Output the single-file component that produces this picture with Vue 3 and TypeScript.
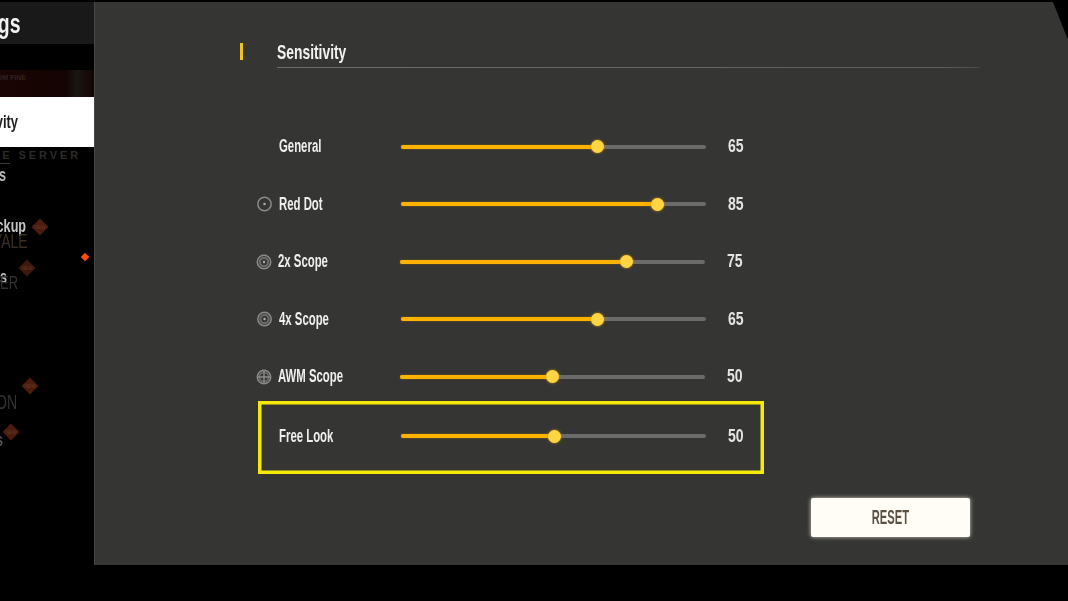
<script setup lang="ts">
interface Row { label: string; value: number; pos: number; icon: string; nudge: boolean }
const rows: Row[] = [
  { label: 'General', value: 65, pos: 64.4, icon: '', nudge: false },
  { label: 'Red Dot', value: 85, pos: 84, icon: 'dot', nudge: false },
  { label: '2x Scope', value: 75, pos: 74.3, icon: 'scope', nudge: true },
  { label: '4x Scope', value: 65, pos: 64.4, icon: 'scope', nudge: false },
  { label: 'AWM Scope', value: 50, pos: 50, icon: 'cross', nudge: true },
]
</script>

<template>
  <div class="page">
    <aside class="side">
      <div class="side-head"><span>Settings</span></div>
      <div class="promo"><span class="promo-text">CUSTOM FINE</span></div>
      <div class="active"><span>Sensitivity</span></div>
      <div class="ghost-server"><span>ELITE SERVER</span></div>
      <div class="rule"></div>
      <div class="item item-controls"><span>Controls</span></div>
      <div class="item item-backup">
        <span>Backup</span>
        <i class="badge b1"><em>NEW</em></i>
      </div>
      <div class="ghost ghost-royale"><span>ROYALE</span></div>
      <div class="item item-skins">
        <span>Skins</span>
        <i class="badge b2"><em>NEW</em></i>
        <b class="ghost-er">ER</b>
      </div>
      <div class="ghost ghost-on">
        <span>ON</span>
        <i class="badge b3"><em>NEW</em></i>
      </div>
      <div class="item item-last">
        <span>Skins</span>
        <i class="badge b4"><em>NEW</em></i>
      </div>
      <i class="marker"></i>
    </aside>

    <main class="panel">
      <header class="head">
        <i class="accent"></i>
        <h1 class="title"><span>Sensitivity</span></h1>
      </header>

      <section class="list">
        <div v-for="r in rows" :key="r.label" class="row" :class="{ nudge: r.nudge }">
          <svg v-if="r.icon" class="icon" viewBox="0 0 16 16" width="16" height="16" fill="none" stroke="#8b8b89">
            <circle cx="8" cy="8" r="6.7" stroke-width="1.5" />
            <circle v-if="r.icon === 'dot'" cx="8" cy="8" r="1.3" fill="#a8a8a6" stroke="none" />
            <template v-if="r.icon === 'scope'">
              <circle cx="8" cy="8" r="4.2" stroke-width="2.2" stroke="#6a6a68" />
              <circle cx="8" cy="8" r="1.2" fill="#b0b0ae" stroke="none" />
            </template>
            <template v-if="r.icon === 'cross'">
              <circle cx="8" cy="8" r="4.6" stroke-width="1.8" stroke="#6a6a68" />
              <path d="M2 8h12M8 2v12" stroke-width="1.5" />
            </template>
          </svg>
          <span v-else class="icon"></span>
          <span class="label"><span>{{ r.label }}</span></span>
          <div class="track">
            <div class="fill" :style="{ width: r.pos + '%' }"><i class="thumb"></i></div>
          </div>
          <span class="value"><span>{{ r.value }}</span></span>
        </div>
      </section>

      <div class="row highlight">
        <span class="icon"></span>
        <span class="label"><span>Free Look</span></span>
        <div class="track">
          <div class="fill" :style="{ width: '50.2%' }"><i class="thumb"></i></div>
        </div>
        <span class="value"><span>50</span></span>
      </div>

      <div class="actions">
        <button class="reset" type="button"><span>RESET</span></button>
      </div>
    </main>
  </div>
</template>

<style scoped>
.page {
  width: 1068px;
  height: 601px;
  display: flex;
  overflow: hidden;
  background: #000;
  font-family: "Liberation Sans", sans-serif;
  font-weight: 700;
  position: relative;
}
.side {
  width: 94px;
  flex: none;
  padding-top: 2px;
  height: 565px;
  box-sizing: border-box;
  display: flex;
  flex-direction: column;
  position: relative;
  overflow: hidden;
}
.side > div {
  display: flex;
  justify-content: flex-end;
  align-items: center;
  flex: none;
  position: relative;
}
.side span { flex: none; white-space: nowrap; display: inline-block; transform-origin: right center; }
.side-head {
  height: 42px;
  margin-bottom: 26px;
  background: #191919;
  color: #f2f2f2;
  font-size: 27px;
  padding-right: 73px;
  filter: blur(.4px);
}
.side-head span { transform: scaleX(.72) translateY(1px); }
.promo {
  height: 27px;
  background: linear-gradient(90deg, #190504, #140403 70%, #1a1613 82%, #140403);
  padding-right: 68px;
  align-items: flex-start !important;
}
.promo-text { font-size: 7px; color: #35201c; margin-top: 4px; }
.active {
  height: 50px;
  background: #fff;
  color: #1f1f1f;
  font-size: 19px;
  padding-right: 76px;
  filter: blur(.3px);
}
.active span { transform: scaleX(.68); }
.ghost-server {
  height: 16px;
  padding-right: 13px;
  color: #2b2b2b;
  font-size: 11px;
  letter-spacing: 2.9px;
}
.rule {
  height: 1px;
  width: 10px;
  background: #3a3a3a;
}
.item {
  color: #b9b9b9;
  font-size: 18px;
  filter: blur(.3px);
}
.item span { transform: scaleX(.7); }
.item-controls { height: 22px; padding-right: 88px; }
.item-backup { height: 30px; margin-top: 25px; padding-right: 68px; color: #c4c4c4; }
.ghost {
  color: #3a3020;
  font-size: 20px;
}
.ghost span { transform: scaleX(.7); }
.ghost-royale { height: 20px; margin-top: -10px; padding-right: 66px; font-weight: 400; }
.item-skins { height: 24px; margin-top: 14px; padding-right: 87px; }
.ghost-er {
  position: absolute;
  left: 0;
  top: 8px;
  font-size: 18px;
  font-weight: 400;
  color: #303030;
  transform: scaleX(.72);
  transform-origin: left center;
}
.ghost-on {
  height: 24px;
  margin-top: 101px;
  padding-right: 77px;
  color: #333;
  font-weight: 400;
}
.item-last { height: 22px; margin-top: 15px; padding-right: 91px; color: #555; }
.badge {
  position: absolute;
  width: 12px;
  height: 12px;
  background: #4a1d0e;
  transform: rotate(45deg);
  display: flex;
  align-items: center;
  justify-content: center;
}
.badge em {
  font-style: normal;
  font-size: 6px;
  font-weight: 400;
  color: #6a3a24;
  transform: rotate(-45deg) scaleX(.8);
}
.b1 { left: 34px; top: 10px; }
.b2 { left: 21px; top: -3px; background: #3d180c; }
.b3 { left: 24px; top: -10px; background: #4a1c0c; }
.b4 { left: 5px; top: -3px; background: #4a1c0c; }
.marker {
  position: absolute;
  left: 82px;
  top: 254px;
  width: 6px;
  height: 6px;
  background: #ff4d12;
  transform: rotate(45deg);
}
.panel {
  flex: 1;
  height: 563px;
  margin-top: 2px;
  background: #353634;
  border-left: 1px solid #474846;
  box-sizing: border-box;
  clip-path: polygon(0 0, 959px 0, 974px 38px, 974px 100%, 0 100%);
  color: #f0f0ee;
}
.head {
  display: flex;
  align-items: flex-start;
  padding: 41px 88px 0 145px;
}
.accent {
  width: 3px;
  height: 17px;
  background: #f0c228;
  flex: none;
  filter: blur(.3px);
}
.title {
  flex: 1;
  margin: -5px 0 0 34px;
  height: 30px;
  font-size: 21px;
  line-height: 28px;
  font-weight: 700;
  color: #f2f2f0;
  background: linear-gradient(90deg, #6c6d6b, #5e5f5d 95%, #4a4b49) left bottom / 100% 1px no-repeat;
}
.title span { display: inline-block; transform: scaleX(.66); transform-origin: left center; filter: blur(.35px); }
.list {
  margin: 53.5px 0 0 163px;
  display: flex;
  flex-direction: column;
  gap: 7.5px;
}
.row {
  height: 50px;
  width: 506px;
  display: grid;
  grid-template-columns: 21px 122px 305px 22px 1fr;
  align-items: center;
  box-sizing: border-box;
}
.row .value { grid-column: 5; }
.row.nudge { margin-left: -1px; }
.icon { justify-self: center; transform: translateX(-4.5px); }
.row.nudge .icon { transform: translateX(-4px); }
.label {
  font-size: 17.5px;
  color: #efefed;
  white-space: nowrap;
}
.label span {
  display: inline-block;
  transform: scaleX(.65);
  transform-origin: left center;
  filter: blur(.35px);
}
.track {
  height: 4px;
  background: #6b6c6a;
  border-radius: 2px;
  display: flex;
}
.fill {
  height: 4px;
  background: #ffb200;
  border-radius: 2px;
  box-shadow: 0 0 1.5px #a87000;
  position: relative;
}
.thumb {
  position: absolute;
  right: -6.5px;
  top: -4.5px;
  width: 13px;
  height: 13px;
  border-radius: 50%;
  background: #ffd544;
  box-shadow: 0 0 2.5px #d99400;
}
.value {
  font-size: 18px;
  color: #e4e4e2;
  white-space: nowrap;
}
.value span {
  display: inline-block;
  transform: scaleX(.78);
  transform-origin: left center;
  filter: blur(.35px);
}
.highlight {
  height: 73px;
  margin: -0.5px 0 0 163px;
  padding-bottom: 3px;
  box-shadow: inset 0 0 0 3.5px #f6ea05;
}
.actions {
  display: flex;
  justify-content: flex-end;
  margin-top: 24px;
  padding-right: 98px;
}
.reset {
  width: 159px;
  height: 39px;
  border: none;
  border-radius: 2px;
  background: #fffdf6;
  box-shadow: 0 0 4px rgba(255, 250, 235, .75);
  color: #5b5145;
  font: inherit;
  font-size: 20px;
  padding: 0;
}
.reset span { display: inline-block; transform: scaleX(.56); filter: blur(.3px); }
</style>

<style>
html, body { margin: 0; background: #000; }
</style>
